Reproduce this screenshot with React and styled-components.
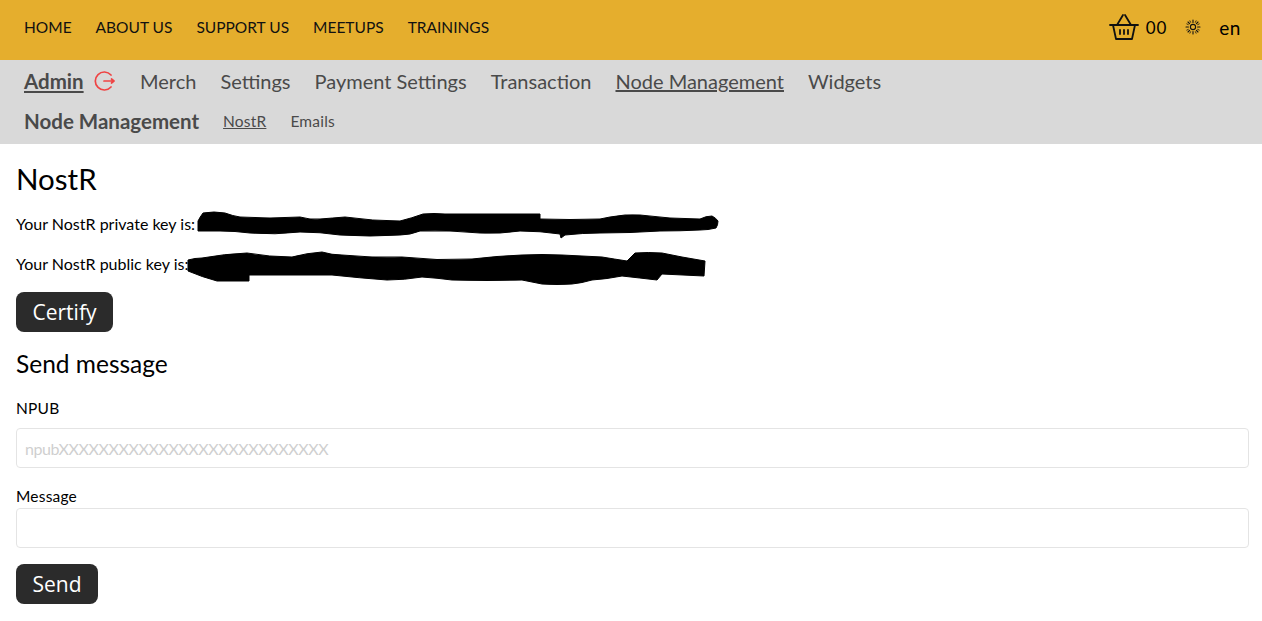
import React from 'react';
import styled, { createGlobalStyle } from 'styled-components';

const GlobalStyle = createGlobalStyle`
  html, body { margin: 0; padding: 0; background: #fff; }
  body { font-family: Lato, "Noto Sans", sans-serif; color: #000; }
  * { box-sizing: border-box; }
`;

const Header = styled.header`
  height: 60px;
  background: #e5ae2d;
  display: flex;
  align-items: center;
  justify-content: space-between;
  padding: 0 21px 6px 24px;
`;

const MainNav = styled.nav`
  display: flex;
  gap: 24px;
`;

const MainLink = styled.a`
  font-size: 15.5px;
  color: #111;
`;

const Tools = styled.div`
  display: flex;
  align-items: center;
`;

const Count = styled.span`
  font-size: 17px;
  letter-spacing: 0.8px;
  margin: 0 18px 0 7px;
`;

const Lang = styled.span`
  font-size: 19px;
  letter-spacing: 0.6px;
  margin-left: 18px;
`;

const SubNav = styled.div`
  height: 84px;
  background: #d9d9d9;
  padding: 7px 24px 0;
  color: #4a4a4a;
`;

const SubRow = styled.div`
  display: flex;
  align-items: center;
  height: 28px;
  gap: 24px;
  margin-bottom: ${(p) => p.$mb || 0}px;
`;

const AdminGroup = styled.div`
  display: flex;
  align-items: center;
  gap: 8px;
`;

const AdminLink = styled.a`
  font-size: 20.5px;
  font-weight: 700;
  text-decoration: underline;
  width: 60px;
  white-space: nowrap;
`;

const SubLink = styled.a`
  font-size: 20px;
  letter-spacing: ${(p) => p.$ls || 0}px;
  text-decoration: ${(p) => (p.$active ? 'underline' : 'none')};
`;

const SectionName = styled.span`
  font-size: 20.5px;
  font-weight: 700;
`;

const SmallLink = styled.a`
  font-size: 15.5px;
  letter-spacing: 0.2px;
  text-decoration: ${(p) => (p.$active ? 'underline' : 'none')};
`;

const Main = styled.main`
  padding: 16px 13px 0 16px;
`;

const Title = styled.h1`
  margin: 0;
  font-size: 29.5px;
  font-weight: 400;
  line-height: 38px;
`;

const KeyLine = styled.p`
  display: flex;
  align-items: center;
  height: 24px;
  margin: ${(p) => p.$mt}px 0 0;
  font-size: 16px;
  white-space: nowrap;
`;

const Scribble = styled.svg`
  flex: none;
  align-self: flex-start;
  margin: ${(p) => p.$top}px 0 -12px ${(p) => p.$ml}px;
  overflow: visible;
`;

const Button = styled.button`
  display: block;
  height: 40px;
  width: ${(p) => p.$w}px;
  margin-top: ${(p) => p.$mt}px;
  border: 0;
  border-radius: 8px;
  background: #2b2b2b;
  color: #fff;
  font-family: "Open Sans", sans-serif;
  font-size: 21px;
  padding: 0;
`;

const SubTitle = styled.h2`
  margin: 17px 0 0;
  font-size: 24.5px;
  font-weight: 400;
  line-height: 30px;
`;

const Label = styled.label`
  display: block;
  font-size: 15.5px;
  letter-spacing: 0.2px;
  line-height: 20px;
  margin-top: ${(p) => p.$mt}px;
`;

const Input = styled.input`
  display: block;
  width: 100%;
  height: 40px;
  margin-top: ${(p) => p.$mt}px;
  padding: 0 8px;
  border: 1px solid #e4e4e4;
  border-radius: 4px;
  font-family: Lato, sans-serif;
  font-size: 16px;
  letter-spacing: -0.4px;
  background: #fff;

  &::placeholder { color: #cfcfcf; opacity: 1; }
`;

const BasketIcon = () => (
  <svg width="30" height="28" viewBox="0 0 30 28" fill="none" stroke="#111" strokeWidth="1.8" strokeLinecap="round" strokeLinejoin="round">
    <path d="M1 12h28" />
    <path d="M4 12l3 14h16l3-14" />
    <path d="M8 12l6-10M22 12l-6-10" />
    <path d="M11 17v4M15 17v4M19 17v4" />
  </svg>
);

const SunIcon = () => (
  <svg width="16" height="16" viewBox="0 0 16 16" fill="none" stroke="#111" strokeWidth="1.1" strokeLinecap="round">
    <circle cx="8" cy="8" r="2.6" />
    <path d="M8 1v2.4M8 12.6V15M1 8h2.4M12.6 8H15M3 3l1.6 1.6M11.4 11.4L13 13M3 13l1.6-1.6M11.4 4.6L13 3" />
    <path d="M4.9 1.8l.7 1.5M10.4 12.7l.7 1.5M1.8 11.1l1.5-.7M12.7 5.6l1.5-.7M11.1 1.8l-.7 1.5M5.6 12.7l-.7 1.5M1.8 4.9l1.5.7M12.7 10.4l1.5.7" strokeWidth="0.8" />
  </svg>
);

const LogoutIcon = () => (
  <svg width="24" height="22" viewBox="0 0 24 22" fill="none" stroke="#ef4444" strokeWidth="1.7" strokeLinecap="round" strokeLinejoin="round">
    <path d="M19 5A9 9 0 1 0 19 17" />
    <path d="M12 11h10M19.5 9l2.5 2-2.5 2" />
  </svg>
);

const PrivateScribble = () => (
  <Scribble $ml={3} $top={0} width="521" height="28" viewBox="0 0 521 28">
    <path
      fill="#000"
      stroke="#000"
      strokeLinejoin="round"
      d="M0 10Q2 6 5 2Q16 0 27 2Q35 5 42 6Q72 8 102 6Q112 9 122 8Q135 7 147 6Q175 10 202 10Q214 7 225 3Q236 2 247 3L342 3L342 8Q372 9 402 8Q407 7 412 6Q427 3 442 4Q472 8 502 8Q508 5 514 5Q518 7 520 10Q520 14 518 17Q510 19 502 19Q482 20 462 20Q432 22 402 22Q385 22 367 24L363 27L362 23Q342 20 322 20Q302 23 282 22Q252 19 222 20Q212 24 202 24Q172 26 142 24Q122 21 102 21Q77 24 52 22Q37 20 22 20L0 20Z"
    />
  </Scribble>
);

const PublicScribble = () => (
  <Scribble $ml={0} $top={1} width="518" height="32" viewBox="0 0 518 32">
    <path
      fill="#000"
      stroke="#000"
      strokeLinejoin="round"
      d="M0 8Q7 6 14 6Q36 2 59 1Q82 5 104 5Q119 1 134 0Q144 3 154 3Q184 6 214 5Q249 9 284 7Q309 4 334 3Q354 2 374 3Q394 4 414 5Q426 7 439 9L447 1Q460 0 474 1Q484 3 494 5L517 9L516 24Q495 23 474 22L469 28Q452 26 434 24Q419 27 404 28Q394 31 384 32Q369 33 354 32Q344 30 334 28Q299 29 264 28Q249 26 234 25Q216 28 199 28Q172 26 144 23L61 23L61 29L29 29Q14 25 0 19Z"
    />
  </Scribble>
);

export default function App() {
  return (
    <>
      <GlobalStyle />
      <Header>
        <MainNav>
          <MainLink>HOME</MainLink>
          <MainLink>ABOUT US</MainLink>
          <MainLink>SUPPORT US</MainLink>
          <MainLink>MEETUPS</MainLink>
          <MainLink>TRAININGS</MainLink>
        </MainNav>
        <Tools>
          <BasketIcon />
          <Count>00</Count>
          <SunIcon />
          <Lang>en</Lang>
        </Tools>
      </Header>
      <SubNav>
        <SubRow $mb={12}>
          <AdminGroup>
            <AdminLink>Admin</AdminLink>
            <LogoutIcon />
          </AdminGroup>
          <SubLink>Merch</SubLink>
          <SubLink>Settings</SubLink>
          <SubLink>Payment Settings</SubLink>
          <SubLink>Transaction</SubLink>
          <SubLink $active>Node Management</SubLink>
          <SubLink>Widgets</SubLink>
        </SubRow>
        <SubRow>
          <SectionName>Node Management</SectionName>
          <SmallLink $active>NostR</SmallLink>
          <SmallLink>Emails</SmallLink>
        </SubRow>
      </SubNav>
      <Main>
        <Title>NostR</Title>
        <KeyLine $mt={13}>Your NostR private key is:<PrivateScribble /></KeyLine>
        <KeyLine $mt={16}>Your NostR public key is:<PublicScribble /></KeyLine>
        <Button $mt={17} $w={97}>Certify</Button>
        <SubTitle>Send message</SubTitle>
        <Label $mt={19}>NPUB</Label>
        <Input $mt={10} placeholder="npubXXXXXXXXXXXXXXXXXXXXXXXXXXX" />
        <Label $mt={18}>Message</Label>
        <Input $mt={2} />
        <Button $mt={16} $w={82}>Send</Button>
      </Main>
    </>
  );
}
